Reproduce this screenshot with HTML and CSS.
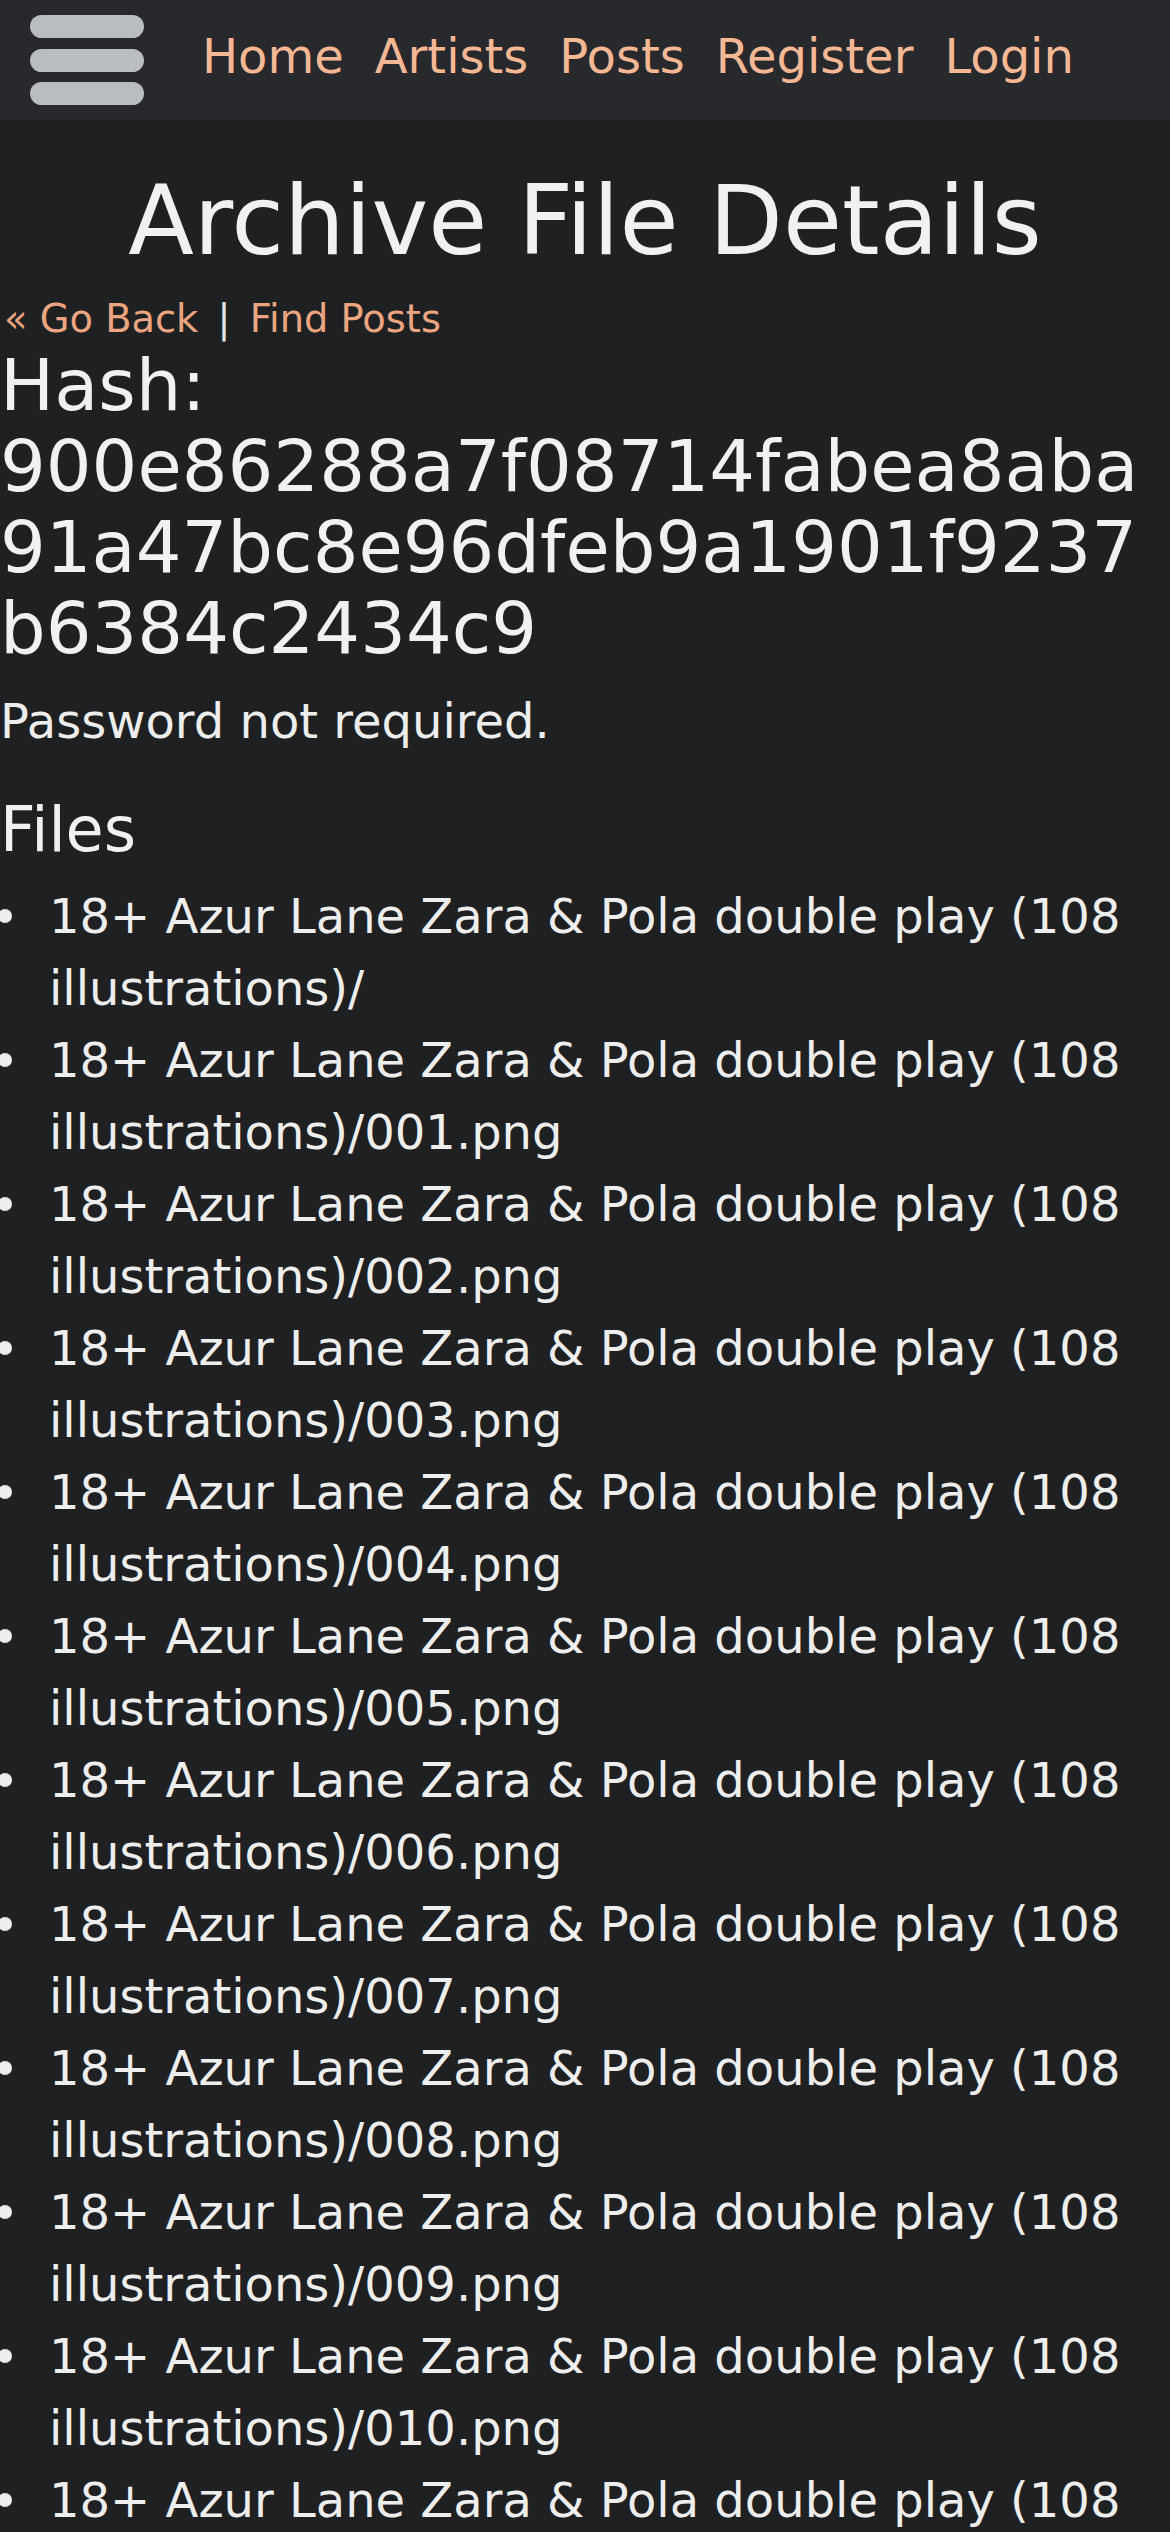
FILE: index.html
```html
<!DOCTYPE html>
<html lang="en">
<head>
<meta charset="utf-8">
<title>Archive File Details</title>
<link rel="stylesheet" href="styles.css">
</head>
<body>
<header class="navbar">
  <button class="menu-toggle" type="button" aria-label="Menu">
    <span class="bar"></span>
    <span class="bar"></span>
    <span class="bar"></span>
  </button>
  <nav class="nav-links">
    <a href="#">Home</a>
    <a href="#">Artists</a>
    <a href="#">Posts</a>
    <a href="#">Register</a>
    <a href="#">Login</a>
  </nav>
</header>
<main class="content">
  <h1 class="page-title">Archive File Details</h1>
  <div class="sub-links"><a href="#">« Go Back</a> <span class="divider">|</span> <a href="#">Find Posts</a></div>
  <h3 class="hash">Hash:<br>900e86288a7f08714fabea8aba<br>91a47bc8e96dfeb9a1901f9237<br>b6384c2434c9</h3>
  <p class="password-note">Password not required.</p>
  <h4 class="files-title">Files</h4>
  <ul class="file-list">
    <li>18+ Azur Lane Zara &amp; Pola double play (108 illustrations)/</li>
    <li>18+ Azur Lane Zara &amp; Pola double play (108 illustrations)/001.png</li>
    <li>18+ Azur Lane Zara &amp; Pola double play (108 illustrations)/002.png</li>
    <li>18+ Azur Lane Zara &amp; Pola double play (108 illustrations)/003.png</li>
    <li>18+ Azur Lane Zara &amp; Pola double play (108 illustrations)/004.png</li>
    <li>18+ Azur Lane Zara &amp; Pola double play (108 illustrations)/005.png</li>
    <li>18+ Azur Lane Zara &amp; Pola double play (108 illustrations)/006.png</li>
    <li>18+ Azur Lane Zara &amp; Pola double play (108 illustrations)/007.png</li>
    <li>18+ Azur Lane Zara &amp; Pola double play (108 illustrations)/008.png</li>
    <li>18+ Azur Lane Zara &amp; Pola double play (108 illustrations)/009.png</li>
    <li>18+ Azur Lane Zara &amp; Pola double play (108 illustrations)/010.png</li>
    <li>18+ Azur Lane Zara &amp; Pola double play (108 illustrations)/011.png</li>
    <li>18+ Azur Lane Zara &amp; Pola double play (108 illustrations)/012.png</li>
  </ul>
</main>
</body>
</html>
```
FILE: styles.css
```css
html, body {
  margin: 0;
  padding: 0;
}

body {
  background: #1f2022;
  color: #eeeeee;
  font-family: "DejaVu Sans", "Noto Sans", sans-serif;
  font-size: 48px;
  line-height: 72px;
  overflow: hidden;
}

a {
  text-decoration: none;
}

.navbar {
  height: 120px;
  background: #28292d;
  display: flex;
  align-items: center;
  padding-left: 30px;
  gap: 58px;
}

.menu-toggle {
  width: 114px;
  height: 90px;
  padding: 0;
  border: 0;
  background: transparent;
  display: flex;
  flex-direction: column;
  justify-content: space-between;
}

.menu-toggle .bar {
  display: block;
  width: 114px;
  height: 23px;
  border-radius: 12px;
  background: #b9bcc1;
}

.nav-links {
  display: flex;
  gap: 31px;
  margin-bottom: 8px;
}

.nav-links a {
  color: #f6b894;
  font-size: 48px;
  line-height: 72px;
}

.page-title {
  margin: 44px 0 0;
  font-size: 96px;
  line-height: 115px;
  font-weight: normal;
  text-align: center;
  color: #f1f1f1;
}

.sub-links {
  margin-top: 17px;
  padding-left: 4px;
  font-size: 38.4px;
  line-height: 46px;
  color: #e4e6ea;
}

.sub-links a {
  color: #eba681;
}

.sub-links .divider {
  margin: 0 7px;
}

.hash {
  margin: 3px 0 0;
  font-size: 72px;
  line-height: 81px;
  font-weight: normal;
  color: #f1f1f1;
}

.password-note {
  margin: 16px 0 0;
  font-size: 48px;
  line-height: 72px;
}

.files-title {
  margin: 36px 0 0;
  font-size: 62px;
  line-height: 74px;
  font-weight: normal;
  color: #f1f1f1;
}

.file-list {
  margin: 13px 0 0;
  padding: 0;
  list-style: none;
}

.file-list li {
  position: relative;
  padding-left: 49px;
  font-size: 48px;
  line-height: 72px;
}

.file-list li::before {
  content: "";
  position: absolute;
  left: -2px;
  top: 29px;
  width: 14px;
  height: 14px;
  border-radius: 50%;
  background: #eeeeee;
}
```
